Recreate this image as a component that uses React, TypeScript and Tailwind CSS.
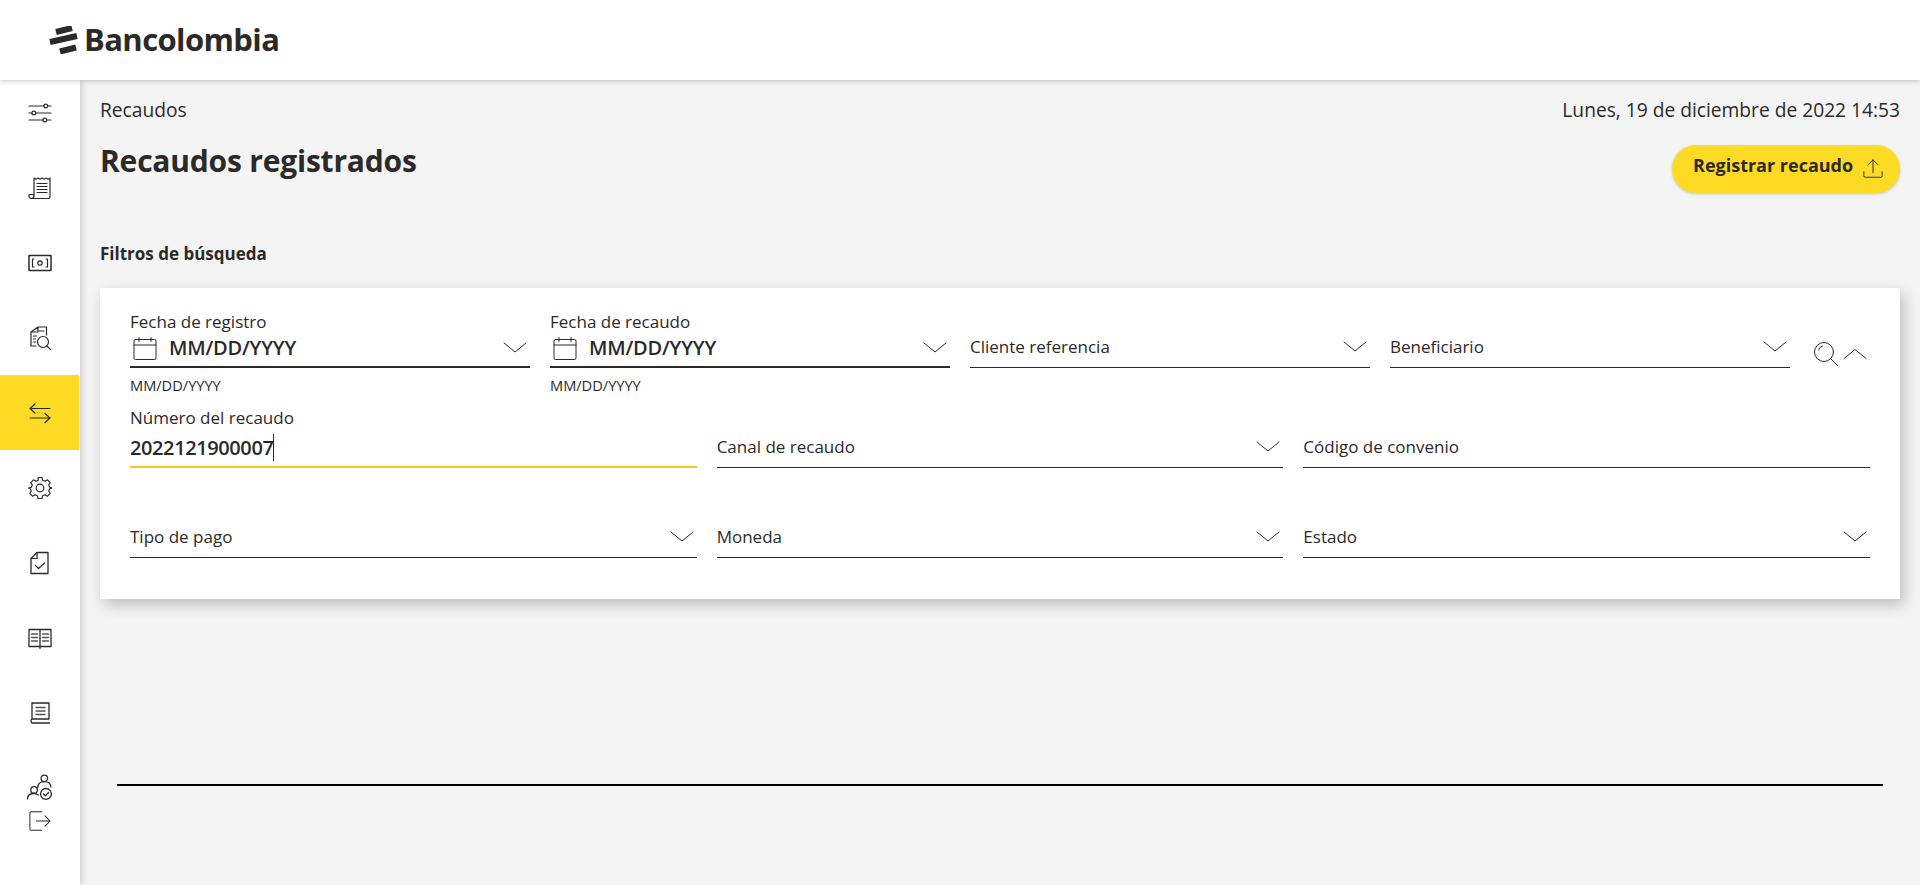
// Bancolombia recaudos search screen
import type { ReactNode } from 'react';

const ink = '#2c2a29';

function Icon({ size = 24, stroke = 1, children, className = '' }: { size?: number; stroke?: number; children: ReactNode; className?: string }) {
  return (
    <svg
      width={size}
      height={size}
      viewBox="0 0 24 24"
      fill="none"
      stroke={ink}
      strokeWidth={stroke}
      strokeLinecap="round"
      strokeLinejoin="round"
      className={`shrink-0 ${className}`}
    >
      {children}
    </svg>
  );
}

const Chevron = () => (
  <Icon size={24}>
    <path d="M1 7l11 9 11-9" />
  </Icon>
);

const ChevronUp = () => (
  <Icon size={24}>
    <path d="M1 16.5l11-9 11 9" />
  </Icon>
);

const Calendar = () => (
  <Icon size={24}>
    <rect x="1" y="3.5" width="22" height="20" rx="1.5" />
    <path d="M1 9h22M6 1.5v4M18 1.5v4" />
  </Icon>
);

const SearchGlass = () => (
  <Icon size={24}>
    <circle cx="10" cy="10" r="9.5" />
    <path d="M17 17l7 7M4.5 8a6 6 0 0 1 4-4" />
  </Icon>
);

const UploadIcon = () => (
  <Icon size={22}>
    <path d="M12 16V2M6.5 7.5L12 2l5.5 5.5M2 15v4.5a1.5 1.5 0 0 0 1.500 1.500h17a1.500 1.500 0 0 0 1.500-1.500V15" />
  </Icon>
);

const navIcons: ReactNode[] = [
  <>
    <path d="M1 5h15M19.500 5H23M1 12h3M7.500 12H23M1 19h14M18.500 19H23" />
    <circle cx="17.800" cy="5" r="1.900" />
    <circle cx="5.800" cy="12" r="1.900" />
    <circle cx="16.800" cy="19" r="1.900" />
  </>,
  <>
    <path d="M6 20V2l2 1.200L10 2l2 1.200L14 2l2 1.200L18 2l2 1.200 2-1.200v19a1.500 1.500 0 0 1-1.500 1.500H3A2 2 0 0 1 1 20.500V18.500h5" />
    <path d="M9 7.500h10M9 10.500h10M9 13.500h10M9 16.500h10M3 22.500c2 0 3-1 3-2.500" />
  </>,
  <>
    <rect x="1" y="4.500" width="22" height="15" strokeWidth={1.5} />
    <path d="M6 8H4.500v8H6M18 8h1.500v8H18" />
    <circle cx="12" cy="12" r="2.200" />
  </>,
  <>
    <path d="M10 1h8.500v8M3 20V6l7-5v5H3M3 20h5" />
    <path d="M5.500 10h3M5.500 13h2M5.500 16h2M11 5h5" />
    <circle cx="15" cy="16" r="5.500" />
    <path d="M19 20l3.500 3.500" />
  </>,
  <>
    <path d="M2 7.500h20M2 7.500l5-4.500M2 7.500l5 4.500M22 17H2M22 17l-5-4.500M22 17l-5 4.500" />
  </>,
  <>
    <path d="M10 1.500h4l.7 2.800 2.300 1 2.500-1.500 2.700 2.800-1.500 2.400 1 2.300 2.800.7v0l-2.800.7-1 2.300 1.500 2.500-2.700 2.700-2.500-1.500-2.300 1-.7 2.800h-4l-.7-2.800-2.300-1-2.500 1.500-2.700-2.700 1.500-2.500-1-2.300L.5 12l2.800-.7 1-2.300-1.500-2.400 2.700-2.800 2.500 1.500 2.300-1z" />
    <circle cx="12" cy="12" r="3.800" />
  </>,
  <>
    <path d="M9 1.500h11v21H3v-15z" strokeWidth={1.3} />
    <path d="M9 1.500v6H3" />
    <path d="M7.500 14.500l3 3 6-5.500" />
  </>,
  <>
    <path d="M12 3.500H1v17h11M12 3.500h11v17H12M12 3.500v19" strokeWidth={1.3} />
    <path d="M3.500 8h6M3.500 11.500h6M3.500 15h6M14.500 8h6M14.500 11.500h6M14.500 15h6" strokeWidth={1.4} stroke="#555" />
  </>,
  <>
    <path d="M4 18V2h17v16H4zM4 18a2.500 2.500 0 0 0 0 4h17.500" strokeWidth={1.3} />
    <path d="M8 6.500h9M8 10h9M8 13.500h9" strokeWidth={1.4} stroke="#555" />
  </>,
];

function Sidebar() {
  return (
    <aside className="relative z-10 flex w-20 shrink-0 flex-col bg-white shadow-[2px_0_6px_rgba(0,0,0,0.16)]">
      {navIcons.map((icon, i) => (
        <div
          key={i}
          className={`flex items-center justify-center ${i === 0 ? 'h-[70px] pb-1' : 'h-[75px]'} ${i === 4 ? 'bg-[#fdda24] mr-[1px]' : ''}`}
        >
          <Icon stroke={1.2}>{icon}</Icon>
        </div>
      ))}
      <div className="mt-6 flex flex-col items-center gap-[10px]">
        <Icon size={26} stroke={1.2}>
          <circle cx="16" cy="4" r="3" />
          <path d="M10 12.500c0-3.500 2.500-5.500 6-5.500s6 2 6 5" />
          <circle cx="6.500" cy="14.700" r="3" />
          <path d="M.5 23c0-3 2-5 6-5 2 0 3 .5 4 1.500" />
          <circle cx="17.500" cy="18.400" r="5" />
          <path d="M15.200 18.400l1.700 1.700 3-3" />
        </Icon>
        <Icon size={22} stroke={1.1}>
          <path d="M14 2H2.500A1.500 1.500 0 0 0 1 3.500v17A1.500 1.500 0 0 0 2.500 22H14M8 12h15M17.500 6.500L23 12l-5.500 5.500" />
        </Icon>
      </div>
    </aside>
  );
}

function SelectField({ label, className = '' }: { label: string; className?: string }) {
  return (
    <div className={`flex h-[42px] items-center justify-between border-b border-[#2c2a29] ${className}`}>
      <span className="text-[17px] leading-[24px] text-[#2c2a29]">{label}</span>
      <span className="mr-[3px]">
        <Chevron />
      </span>
    </div>
  );
}

function DateField({ label }: { label: string }) {
  return (
    <div className="w-[400px]">
      <div className="text-[17px] leading-[22px] text-[#2c2a29]">{label}</div>
      <div className="flex h-[35px] items-center justify-between border-b-2 border-[#2c2a29] pb-1">
        <div className="flex items-center gap-3 pl-[3px]">
          <Calendar />
          <span className="text-[20px] font-semibold tracking-[-0.2px] text-[#2c2a29]">MM/DD/YYYY</span>
        </div>
        <span className="mr-[3px]">
          <Chevron />
        </span>
      </div>
      <div className="mt-2 text-[14.600px] leading-[18px] text-[#2c2a29]">MM/DD/YYYY</div>
    </div>
  );
}

function FiltersCard() {
  return (
    <section className="mt-[21px] h-[311px] bg-white pl-[30px] pr-[30px] pt-[23px] shadow-[4px_6px_14px_rgba(0,0,0,0.22)]">
      <div className="flex items-start gap-5">
        <DateField label="Fecha de registro" />
        <DateField label="Fecha de recaudo" />
        <SelectField label="Cliente referencia" className="mt-[15px] w-[400px]" />
        <SelectField label="Beneficiario" className="mt-[15px] w-[400px]" />
        <div className="ml-1 mt-[31px] flex items-center gap-[5px]">
          <SearchGlass />
          <ChevronUp />
        </div>
      </div>

      <div className="mt-[13px] grid grid-cols-3 gap-x-5">
        <div>
          <div className="text-[17px] leading-[22px] text-[#2c2a29]">Número del recaudo</div>
          <div className="flex h-[39px] items-center border-b-2 border-[#f2c81e]">
            <span className="text-[20px] font-semibold tracking-[-0.4px] text-[#2c2a29]">2022121900007</span>
            <span className="h-[27px] w-px bg-[#2c2a29]" />
          </div>
        </div>
        <SelectField label="Canal de recaudo" className="mt-[19px]" />
        <div className="mt-[19px] flex h-[42px] items-center border-b border-[#2c2a29] text-[17px] text-[#2c2a29]">
          Código de convenio
        </div>
        <SelectField label="Tipo de pago" className="mt-12" />
        <SelectField label="Moneda" className="mt-12" />
        <SelectField label="Estado" className="mt-12" />
      </div>
    </section>
  );
}

export default function App() {
  return (
    <div className="flex h-[885px] flex-col overflow-hidden bg-[#f4f4f4] font-['Open_Sans',sans-serif] text-[#2c2a29]">
      <header className="relative z-20 flex h-20 shrink-0 items-center bg-white pl-[49px] shadow-[0_1px_5px_rgba(0,0,0,0.22)]">
        <svg width="29" height="28" viewBox="0 0 29 28" fill="none" stroke={ink} strokeWidth={6} className="mr-[6px]">
          <path d="M7 6L23 2" />
          <path d="M1 16L28 10" />
          <path d="M11 25.500L27 21.500" />
        </svg>
        <span className="pb-[2px] text-[31px] font-bold leading-none tracking-[-0.6px] text-[#2c2a29]">Bancolombia</span>
      </header>

      <div className="flex min-h-0 flex-1">
        <Sidebar />
        <main className="flex-1 pl-5 pr-5">
          <div className="flex items-start justify-between pt-[17px]">
            <span className="text-[19.200px] leading-[26px]">Recaudos</span>
            <span className="text-[19.200px] leading-[26px]">Lunes, 19 de diciembre de 2022 14:53</span>
          </div>
          <div className="flex items-start justify-between">
            <h1 className="mt-[18px] text-[30px] font-bold leading-[40px] tracking-[-0.2px]">Recaudos registrados</h1>
            <button className="mt-[22px] flex h-[48px] w-[228px] items-center gap-[9px] rounded-full bg-[#fdda24] pl-[21px] text-[18px] font-bold shadow-[0_1px_3px_rgba(0,0,0,0.2)]">
              <span className="pb-[7px]">Registrar recaudo</span>
              <UploadIcon />
            </button>
          </div>
          <h2 className="mt-12 text-[17px] font-bold leading-[26px]">Filtros de búsqueda</h2>
          <FiltersCard />
          <div className="mx-[17px] mt-[185px] h-[2px] bg-black" />
        </main>
      </div>
    </div>
  );
}
